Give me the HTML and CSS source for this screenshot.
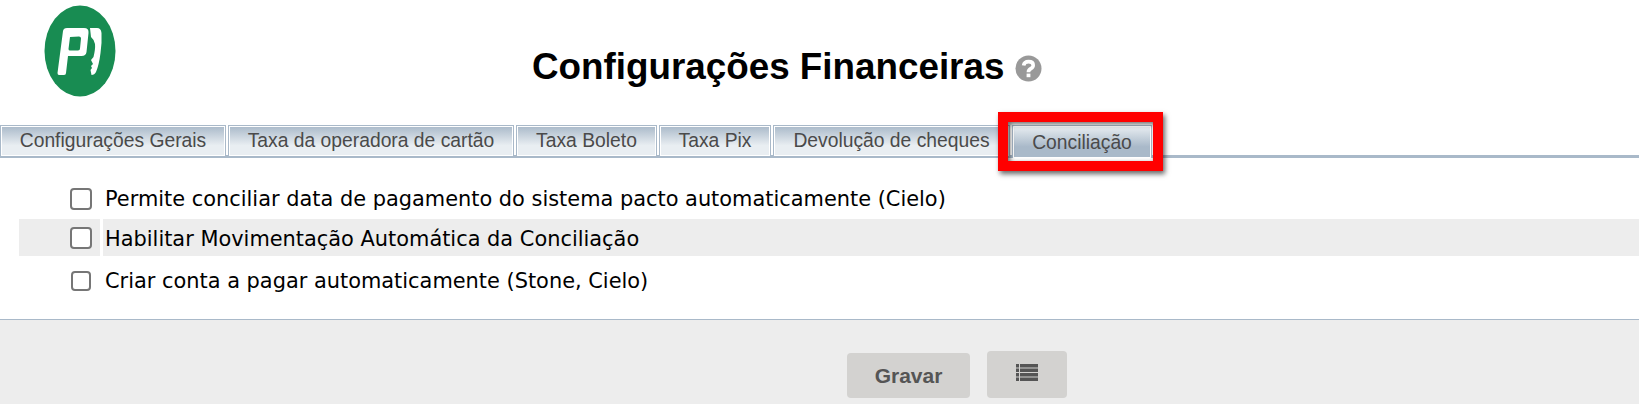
FILE: index.html
```html
<!DOCTYPE html>
<html lang="pt-BR">
<head>
    <meta charset="UTF-8">
    <title>Configurações Financeiras</title>
    <link rel="stylesheet" href="styles.css">
</head>
<body>
    <header class="header">
        <svg class="logo" width="72" height="92" viewBox="0 0 72 92">
            <ellipse cx="36" cy="46" rx="35.5" ry="45.5" fill="#188c52"/>
            <path fill="#fff" fill-rule="evenodd" d="M19 26q.5-3 4-3h17q5 0 4.5 5l-2 19q-.5 4-5 4H24l-2 17q0 2-2 2h-5q-1.5 0-1.5-2zM26 32l-1.5 12q0 1.5 1.5 1.5h8q2 0 2-2l1-10q0-2-2-2z"/>
            <path fill="#fff" d="M46 23h7q4 0 4.5 5q.5 10-1 20q-1.5 12-4.5 19q-1.5 3-4.5 3l-1-5 1.5-2-1-2 2-2-2-4 2.5-3q2-8 1.5-13q-.5-4-4-7z"/>
        </svg>
        <h1 class="title">
            Configurações Financeiras
            <svg class="help" width="27" height="27" viewBox="0 0 27 27">
                <circle cx="13.5" cy="13.5" r="13" fill="#999"/>
                <path fill="none" stroke="#fff" stroke-width="3.6" d="M8.6 10.6q.6-4 5-4q4.6 0 4.6 3.6q0 2-2.4 3.4q-2.4 1.4-2.4 3.6"/>
                <rect x="11.6" y="18.6" width="3.8" height="3.6" fill="#fff"/>
            </svg>
        </h1>
    </header>

    <nav class="tabs">
        <a class="tab tab-1">Configurações Gerais</a>
        <a class="tab tab-2">Taxa da operadora de cartão</a>
        <a class="tab tab-3">Taxa Boleto</a>
        <a class="tab tab-4">Taxa Pix</a>
        <a class="tab tab-5">Devolução de cheques</a>
        <a class="tab tab-6 active">Conciliação<span class="highlight"></span></a>
    </nav>

    <section class="options">
        <div class="row">
            <div class="check-cell"><span class="check"></span></div>
            <div class="label">Permite conciliar data de pagamento do sistema pacto automaticamente (Cielo)</div>
        </div>
        <div class="row row-alt">
            <div class="check-cell"><span class="check"></span></div>
            <div class="label">Habilitar Movimentação Automática da Conciliação</div>
        </div>
        <div class="row row-last">
            <div class="check-cell"><span class="check check-small"></span></div>
            <div class="label">Criar conta a pagar automaticamente (Stone, Cielo)</div>
        </div>
    </section>

    <footer class="footer">
        <button class="btn btn-save">Gravar</button>
        <button class="btn btn-list">
            <svg class="list-icon" width="22" height="18" viewBox="0 0 22 18" fill="#555">
                <rect x="0" y="0" width="3" height="3.5"/>
                <rect x="0" y="4.5" width="3" height="3.5"/>
                <rect x="0" y="9" width="3" height="3.5"/>
                <rect x="0" y="13.5" width="3" height="3.5"/>
                <rect x="4" y="0" width="18" height="3.5"/>
                <rect x="4" y="4.5" width="18" height="3.5"/>
                <rect x="4" y="9" width="18" height="3.5"/>
                <rect x="4" y="13.5" width="18" height="3.5"/>
            </svg>
        </button>
    </footer>
</body>
</html>
```
FILE: styles.css
```css
:root {
    --line: #a9b9c9;
    --band: #ededed;
    --btn: #d3d2d0;
}

html, body {
    height: 100%;
}

body {
    margin: 0;
    display: flex;
    flex-direction: column;
    background-color: #ffffff;
    font-family: "Liberation Sans", Arial, sans-serif;
    overflow: hidden;
}

.header {
    height: 125px;
    display: flex;
    align-items: flex-start;
    box-sizing: border-box;
    padding: 5px 0 0 44px;
}

.logo {
    flex: none;
}

.title {
    margin: 41px 0 0 416px;
    font-size: 36.8px;
    line-height: 42px;
    font-weight: bold;
    color: #000000;
    display: flex;
    align-items: center;
    gap: 11px;
    white-space: nowrap;
}

.help {
    margin-top: 3px;
}

.tabs {
    height: 30px;
    display: flex;
    gap: 2px;
    border-bottom: 3px solid var(--line);
}

.tab {
    box-sizing: border-box;
    height: 31px;
    border: 1px solid var(--line);
    border-bottom: none;
    box-shadow: inset 0 0 0 1px #ffffff;
    background: linear-gradient(#a9b9c9, #e9eef2 65%);
    color: #4a4a4a;
    font-size: 19.3px;
    line-height: 29px;
    text-align: center;
    white-space: nowrap;
}

.tab-1 { width: 226px; }
.tab-2 { width: 286px; }
.tab-3 { width: 141px; }
.tab-4 { width: 112px; }
.tab-5 { width: 237px; }
.tab-6 { width: 140px; height: 33px; line-height: 34px; }

.active {
    position: relative;
    background: linear-gradient(#e9eef2, #a9b9c9 65%);
}

.highlight {
    position: absolute;
    left: -15px;
    right: -12px;
    top: -14px;
    bottom: -13px;
    border: 10px solid #ff0000;
    box-shadow: 2px 3px 5px rgba(0, 0, 0, 0.6), inset 2px 2px 5px rgba(0, 0, 0, 0.6);
}

.options {
    box-sizing: border-box;
    height: 161px;
    padding: 20px 0 0 19px;
    font-family: "DejaVu Sans", Verdana, sans-serif;
    font-size: 20.9px;
    color: #000000;
}

.row {
    display: flex;
    height: 41px;
    align-items: center;
    gap: 3px;
}

.row-alt {
    height: 37px;
}

.row-alt .check-cell,
.row-alt .label {
    background-color: var(--band);
}

.row-alt .label {
    padding-top: 2px;
    box-sizing: border-box;
}

.row-last {
    height: 50px;
}

.check-cell {
    width: 81px;
    height: 100%;
    display: flex;
    align-items: center;
    padding-left: 51px;
    box-sizing: border-box;
}

.check {
    display: block;
    box-sizing: border-box;
    width: 22px;
    height: 22px;
    background-color: #ffffff;
    border: 2px solid #767676;
    border-radius: 4px;
}

.check-small {
    width: 20px;
    height: 20px;
    margin-left: 1px;
}

.label {
    flex: 1;
    height: 100%;
    display: flex;
    align-items: center;
    padding-left: 2px;
    white-space: nowrap;
}

.footer {
    flex: 1;
    border-top: 1px solid var(--line);
    background-color: var(--band);
    display: flex;
    align-items: flex-start;
    padding: 31px 0 0 847px;
    gap: 17px;
}

.btn {
    border: none;
    border-radius: 4px;
    background-color: var(--btn);
    color: #555555;
    font-family: "Liberation Sans", Arial, sans-serif;
    font-weight: bold;
    font-size: 21px;
    padding: 0;
}

.btn-save {
    width: 123px;
    height: 45px;
    margin-top: 2px;
}

.btn-list {
    width: 80px;
    height: 47px;
    display: flex;
    justify-content: center;
    padding-top: 13px;
    box-sizing: border-box;
}
```
